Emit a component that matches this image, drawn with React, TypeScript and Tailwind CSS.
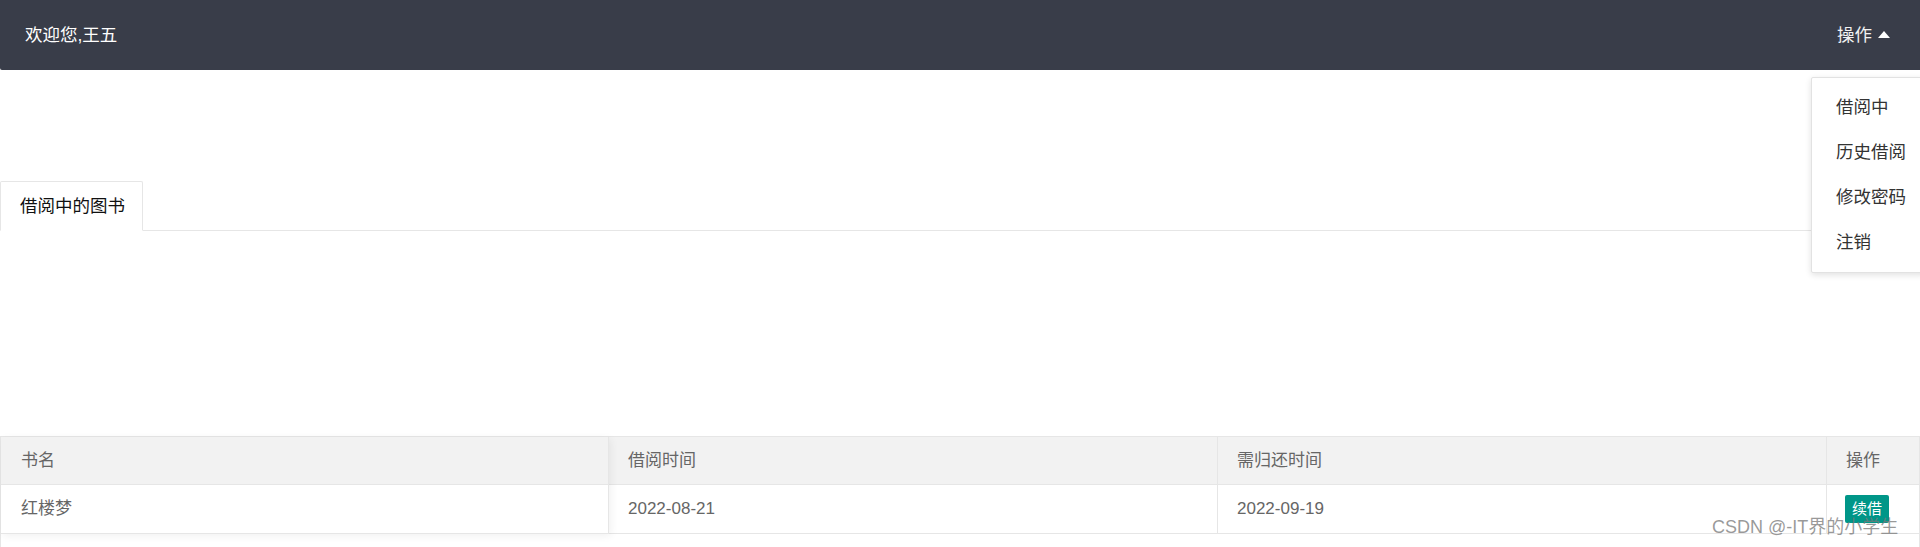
import React from "react";

const font = { fontFamily: '"Liberation Sans", "Noto Sans CJK SC", Arial, sans-serif' };

export default function App() {
  return (
    <div className="relative h-[547px] w-full overflow-hidden bg-white" style={font}>
      {/* Header */}
      <header className="flex h-[70px] items-center justify-between rounded-bl-[2px] bg-[#393D49] pl-[25px] pr-[30px] text-white">
        <span className="text-[17.5px]">欢迎您,王五</span>
        <div className="flex items-center gap-[6px]">
          <span className="text-[17.5px] text-[#f2f2f2]">操作</span>
          <span className="mb-[1px] h-0 w-0 border-b-[7px] border-l-[6.5px] border-r-[6.5px] border-b-white border-l-transparent border-r-transparent" />
        </div>
      </header>

      {/* Tabs */}
      <div className="mt-[111px] flex border-b border-[#e6e6e6]">
        <div className="-mb-px flex h-[50px] w-[143px] items-center rounded-t-[2px] border border-b-white border-[#e6e6e6] bg-white pl-[19px] text-[17.5px] text-[#111]">
          借阅中的图书
        </div>
      </div>

      {/* Table */}
      <div className="relative mt-[205px] border-l border-r border-t border-[#e6e6e6] text-[17px] text-[#666]">
        <div className="grid grid-cols-[608px_609px_609px_1fr] border-b border-[#e6e6e6] bg-[#f2f2f2]">
          <div className="flex h-[47px] items-center border-r border-[#e6e6e6] pl-[20px]">书名</div>
          <div className="flex h-[47px] items-center border-r border-[#e6e6e6] pl-[19px]">借阅时间</div>
          <div className="flex h-[47px] items-center border-r border-[#e6e6e6] pl-[19px]">需归还时间</div>
          <div className="flex h-[47px] items-center pl-[19px]">操作</div>
        </div>
        <div className="grid grid-cols-[608px_609px_609px_1fr] border-b border-[#e6e6e6] bg-white">
          <div className="flex h-[48px] items-center border-r border-[#e6e6e6] pl-[20px]">红楼梦</div>
          <div className="flex h-[48px] items-center border-r border-[#e6e6e6] pl-[19px]">2022-08-21</div>
          <div className="flex h-[48px] items-center border-r border-[#e6e6e6] pl-[19px]">2022-09-19</div>
          <div className="flex h-[48px] items-center pl-[18px]">
            <button className="flex h-[28px] w-[44px] items-center justify-center rounded-[2px] bg-[#009688] text-[15px] text-white">
              续借
            </button>
          </div>
        </div>
        <div className="h-[40px]" />
        <div className="pointer-events-none absolute left-0 top-0 h-[97px] w-[608px] shadow-[2px_2px_8px_rgba(0,0,0,0.06)]" />
      </div>

      {/* Dropdown menu */}
      <div className="absolute left-[1811px] top-[77px] w-[115px] rounded-[2px] border border-[#e2e2e2] bg-white py-[7px] text-[17.5px] text-[#333] shadow-[0_2px_6px_rgba(0,0,0,0.12)]">
        {["借阅中", "历史借阅", "修改密码", "注销"].map((t) => (
          <div key={t} className="flex h-[45px] items-center pl-[24px]">
            {t}
          </div>
        ))}
      </div>

      {/* Watermark */}
      <div className="pointer-events-none absolute left-[1712px] top-[515px] text-[18px] leading-[24px] text-[rgba(120,120,120,0.75)]">
        CSDN @-IT界的小学生
      </div>
    </div>
  );
}
